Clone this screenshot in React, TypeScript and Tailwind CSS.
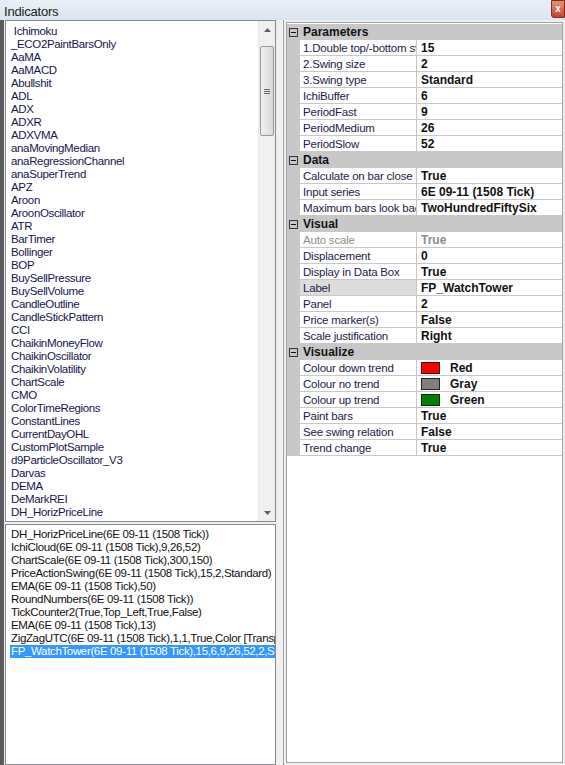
import React from 'react';

type GridProp = { name: string; value: string; swatch?: string; disabled?: boolean; selected?: boolean };
type GridCategory = { title: string; props: GridProp[] };

const indicators = [
  ' Ichimoku', '_ECO2PaintBarsOnly', 'AaMA', 'AaMACD', 'Abullshit', 'ADL', 'ADX', 'ADXR', 'ADXVMA',
  'anaMovingMedian', 'anaRegressionChannel', 'anaSuperTrend', 'APZ', 'Aroon', 'AroonOscillator', 'ATR',
  'BarTimer', 'Bollinger', 'BOP', 'BuySellPressure', 'BuySellVolume', 'CandleOutline', 'CandleStickPattern',
  'CCI', 'ChaikinMoneyFlow', 'ChaikinOscillator', 'ChaikinVolatility', 'ChartScale', 'CMO', 'ColorTimeRegions',
  'ConstantLines', 'CurrentDayOHL', 'CustomPlotSample', 'd9ParticleOscillator_V3', 'Darvas', 'DEMA',
  'DeMarkREI', 'DH_HorizPriceLine',
];

const applied = [
  'DH_HorizPriceLine(6E 09-11 (1508 Tick))',
  'IchiCloud(6E 09-11 (1508 Tick),9,26,52)',
  'ChartScale(6E 09-11 (1508 Tick),300,150)',
  'PriceActionSwing(6E 09-11 (1508 Tick),15,2,Standard)',
  'EMA(6E 09-11 (1508 Tick),50)',
  'RoundNumbers(6E 09-11 (1508 Tick))',
  'TickCounter2(True,Top_Left,True,False)',
  'EMA(6E 09-11 (1508 Tick),13)',
  'ZigZagUTC(6E 09-11 (1508 Tick),1,1,True,Color [Transparent])',
  'FP_WatchTower(6E 09-11 (1508 Tick),15,6,9,26,52,2,Standard)',
];

const categories: GridCategory[] = [
  {
    title: 'Parameters',
    props: [
      { name: '1.Double top/-bottom strength', value: '15' },
      { name: '2.Swing size', value: '2' },
      { name: '3.Swing type', value: 'Standard' },
      { name: 'IchiBuffer', value: '6' },
      { name: 'PeriodFast', value: '9' },
      { name: 'PeriodMedium', value: '26' },
      { name: 'PeriodSlow', value: '52' },
    ],
  },
  {
    title: 'Data',
    props: [
      { name: 'Calculate on bar close', value: 'True' },
      { name: 'Input series', value: '6E 09-11 (1508 Tick)' },
      { name: 'Maximum bars look back', value: 'TwoHundredFiftySix' },
    ],
  },
  {
    title: 'Visual',
    props: [
      { name: 'Auto scale', value: 'True', disabled: true },
      { name: 'Displacement', value: '0' },
      { name: 'Display in Data Box', value: 'True' },
      { name: 'Label', value: 'FP_WatchTower', selected: true },
      { name: 'Panel', value: '2' },
      { name: 'Price marker(s)', value: 'False' },
      { name: 'Scale justification', value: 'Right' },
    ],
  },
  {
    title: 'Visualize',
    props: [
      { name: 'Colour down trend', value: 'Red', swatch: '#ff0000' },
      { name: 'Colour no trend', value: 'Gray', swatch: '#808080' },
      { name: 'Colour up trend', value: 'Green', swatch: '#008000' },
      { name: 'Paint bars', value: 'True' },
      { name: 'See swing relation', value: 'False' },
      { name: 'Trend change', value: 'True' },
    ],
  },
];

const MinusBox = () => (
  <span className="w-[9px] h-[9px] border border-[#333] flex items-center justify-center bg-[#c8c8c8]">
    <span className="w-[5px] h-px bg-[#111]" />
  </span>
);

const CategoryRow = ({ title }: { title: string }) => (
  <div className="h-[16px] bg-[#c8c8c8] flex items-center">
    <div className="w-[13px] flex justify-center">
      <MinusBox />
    </div>
    <span className="pl-[3px] font-bold text-[12px] text-[#111]">{title}</span>
  </div>
);

const PropRow = ({ p }: { p: GridProp }) => (
  <div className="h-[16px] flex">
    <div className="w-[13px] bg-[#c8c8c8] shrink-0" />
    <div
      className={`w-[117px] shrink-0 border-r border-b border-[#c8c8c8] pl-[3px] overflow-hidden whitespace-nowrap leading-[16px] tracking-[-0.2px] ${
        p.selected ? 'bg-[#dcdcdc]' : 'bg-white'
      } ${p.disabled ? 'text-[#8d8d8d]' : 'text-[#1c1c44]'}`}
    >
      {p.name}
    </div>
    <div
      className={`flex-1 border-b border-[#c8c8c8] pl-[4px] flex items-center gap-[9px] font-bold text-[12px] whitespace-nowrap overflow-hidden ${
        p.disabled ? 'text-[#8d8d8d]' : 'text-[#111]'
      }`}
    >
      {p.swatch && <span className="w-[19px] h-[12px] border border-[#222]" style={{ backgroundColor: p.swatch }} />}
      <span className={p.swatch ? 'pl-px' : ''}>{p.value}</span>
    </div>
  </div>
);

const ScrollArrow = ({ down }: { down?: boolean }) => (
  <div className="h-[17px] flex items-center justify-center">
    <svg width="7" height="4" viewBox="0 0 7 4">
      <path d={down ? 'M0 0h7L3.5 4z' : 'M0 4h7L3.5 0z'} fill="#606060" />
    </svg>
  </div>
);

export default function App() {
  return (
    <div
      className="w-[565px] h-[765px] overflow-hidden bg-[#f0f0f0] flex flex-col text-[11.5px] text-[#111]"
      style={{ fontFamily: '"Liberation Sans", Arial, sans-serif' }}
    >
      {/* title bar */}
      <div className="h-[20px] shrink-0 flex items-start justify-between bg-gradient-to-b from-[#eaf0f7] to-[#dbe5f1]">
        <span className="pl-[4px] pt-[2px] text-[13px] text-[#1b1b1b] tracking-[-0.2px]">Indicators</span>
        <div className="w-[14px] h-[18px] rounded-bl-[3px] bg-gradient-to-b from-[#e0907c] to-[#c4412b] border border-[#8b2a1a] flex items-center justify-center">
          <span className="text-white text-[10px] font-bold leading-none">x</span>
        </div>
      </div>

      <div className="flex-1 flex min-h-0">
        {/* left side */}
        <div className="w-[284px] shrink-0 flex flex-col border-l-[4px] border-[#5a5a5a] pl-px border-r border-r-[#a0a0a0] pr-[7px]">
          <div className="h-[502px] shrink-0 flex border border-[#828790] bg-white">
            <div className="flex-1 pt-[4px] pl-[4px] overflow-hidden tracking-[-0.35px] leading-[13px] text-[#16164a]">
              {indicators.map((n) => (
                <div key={n} className="h-[13px] whitespace-pre pl-px">
                  {n}
                </div>
              ))}
            </div>
            <div className="w-[17px] shrink-0 bg-[#f0f0f0] flex flex-col border-l border-[#e8e8e8]">
              <ScrollArrow />
              <div className="mx-px mt-[8px] h-[90px] rounded-[2px] border border-[#979797] bg-gradient-to-r from-[#f2f2f2] to-[#d8d8d8] flex flex-col items-center justify-center gap-px">
                <span className="w-[6px] h-px bg-[#666]" />
                <span className="w-[6px] h-px bg-[#666]" />
                <span className="w-[6px] h-px bg-[#666]" />
              </div>
              <div className="flex-1" />
              <ScrollArrow down />
            </div>
          </div>
          <div className="flex-1 mt-[2px] border border-[#828790] bg-white pt-[3px] pl-[4px] overflow-hidden tracking-[-0.35px] leading-[13px]">
            {applied.map((a, i) => (
              <div
                key={i}
                className={`h-[13px] whitespace-nowrap pl-px ${
                  i === applied.length - 1 ? 'bg-[#3399ff] text-white' : 'text-[#111]'
                }`}
              >
                {a}
              </div>
            ))}
          </div>
        </div>

        {/* property grid */}
        <div className="flex-1 px-[2px] pt-[2px] pb-[2px] flex">
          <div className="flex-1 border border-[#a0a0a0] bg-white pt-px">
            {categories.map((c) => (
              <div key={c.title}>
                <CategoryRow title={c.title} />
                {c.props.map((p) => (
                  <PropRow key={p.name} p={p} />
                ))}
              </div>
            ))}
          </div>
        </div>
      </div>
    </div>
  );
}
